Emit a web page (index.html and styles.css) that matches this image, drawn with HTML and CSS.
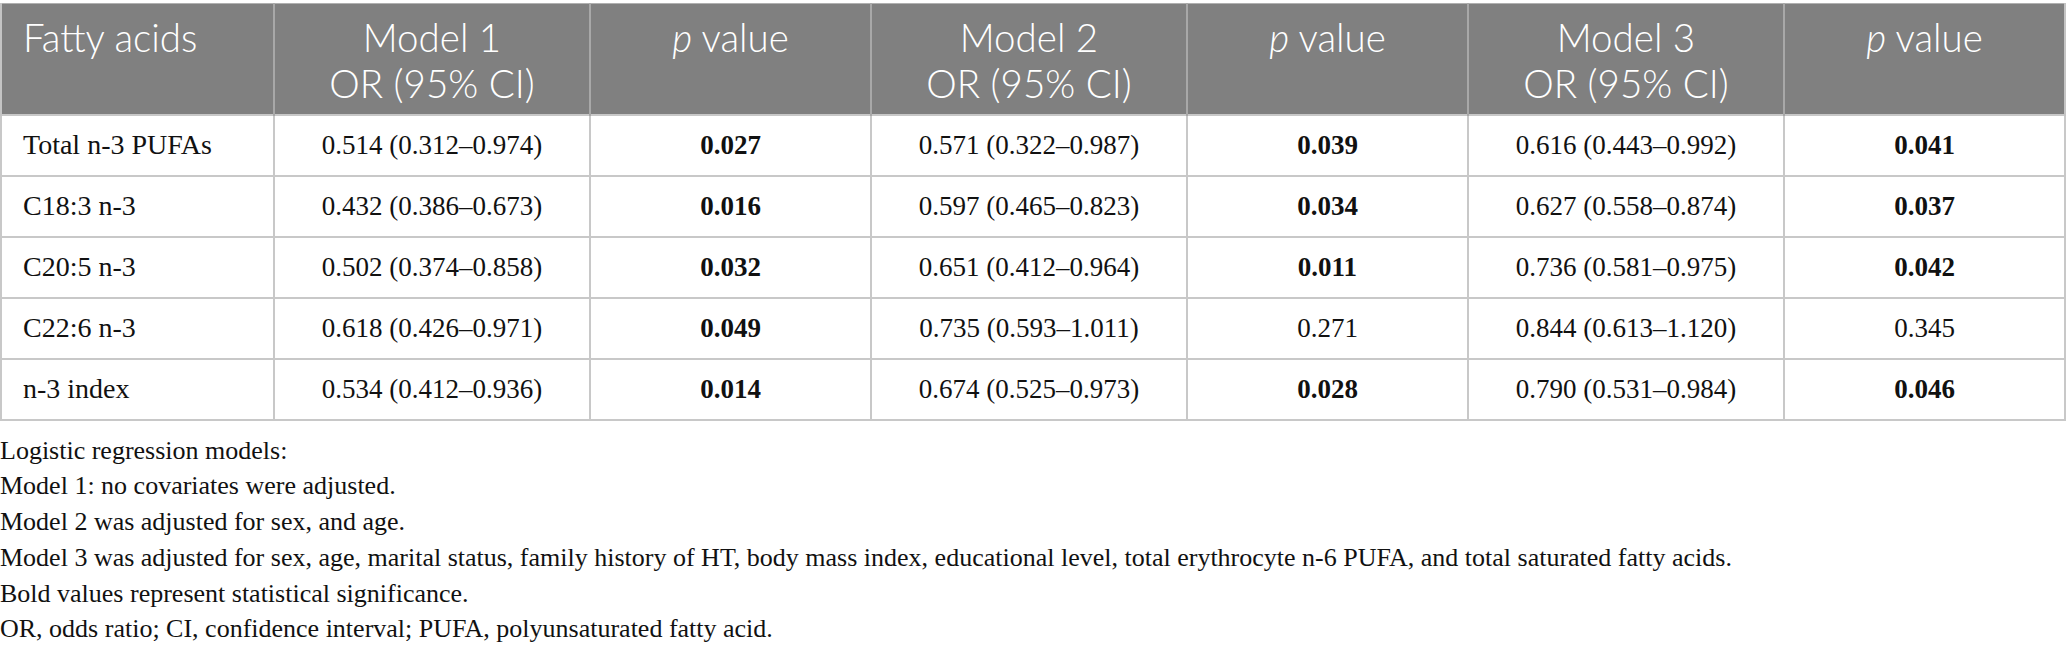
FILE: index.html
```html
<!DOCTYPE html>
<html>
<head>
<meta charset="utf-8">
<link rel="stylesheet" href="styles.css">
</head>
<body>
<div class="page">
<table class="data">
  <colgroup>
    <col class="c-name">
    <col class="c-or">
    <col class="c-p">
    <col class="c-or">
    <col class="c-p">
    <col class="c-or">
    <col class="c-p">
  </colgroup>
  <thead>
    <tr>
      <th class="left"><span class="hl">Fatty acids</span></th>
      <th><span class="hl">Model 1</span><span class="hl">OR (95% CI)</span></th>
      <th><span class="hl"><i>p</i> value</span></th>
      <th><span class="hl">Model 2</span><span class="hl">OR (95% CI)</span></th>
      <th><span class="hl"><i>p</i> value</span></th>
      <th><span class="hl">Model 3</span><span class="hl">OR (95% CI)</span></th>
      <th><span class="hl"><i>p</i> value</span></th>
    </tr>
  </thead>
  <tbody>
    <tr>
      <td class="left">Total n-3 PUFAs</td>
      <td>0.514 (0.312–0.974)</td>
      <td><b>0.027</b></td>
      <td>0.571 (0.322–0.987)</td>
      <td><b>0.039</b></td>
      <td>0.616 (0.443–0.992)</td>
      <td><b>0.041</b></td>
    </tr>
    <tr>
      <td class="left">C18:3 n-3</td>
      <td>0.432 (0.386–0.673)</td>
      <td><b>0.016</b></td>
      <td>0.597 (0.465–0.823)</td>
      <td><b>0.034</b></td>
      <td>0.627 (0.558–0.874)</td>
      <td><b>0.037</b></td>
    </tr>
    <tr>
      <td class="left">C20:5 n-3</td>
      <td>0.502 (0.374–0.858)</td>
      <td><b>0.032</b></td>
      <td>0.651 (0.412–0.964)</td>
      <td><b>0.011</b></td>
      <td>0.736 (0.581–0.975)</td>
      <td><b>0.042</b></td>
    </tr>
    <tr>
      <td class="left">C22:6 n-3</td>
      <td>0.618 (0.426–0.971)</td>
      <td><b>0.049</b></td>
      <td>0.735 (0.593–1.011)</td>
      <td>0.271</td>
      <td>0.844 (0.613–1.120)</td>
      <td>0.345</td>
    </tr>
    <tr>
      <td class="left">n-3 index</td>
      <td>0.534 (0.412–0.936)</td>
      <td><b>0.014</b></td>
      <td>0.674 (0.525–0.973)</td>
      <td><b>0.028</b></td>
      <td>0.790 (0.531–0.984)</td>
      <td><b>0.046</b></td>
    </tr>
  </tbody>
</table>
<div class="notes">
  <p>Logistic regression models:</p>
  <p>Model 1: no covariates were adjusted.</p>
  <p>Model 2 was adjusted for sex, and age.</p>
  <p>Model 3 was adjusted for sex, age, marital status, family history of HT, body mass index, educational level, total erythrocyte n-6 PUFA, and total saturated fatty acids.</p>
  <p>Bold values represent statistical significance.</p>
  <p>OR, odds ratio; CI, confidence interval; PUFA, polyunsaturated fatty acid.</p>
</div>
</div>
</body>
</html>
```
FILE: styles.css
```css
html, body {
  margin: 0;
  padding: 0;
  background: #ffffff;
}
.page {
  padding-top: 3px;
  width: 2067px;
}
.data {
  border-collapse: collapse;
  table-layout: fixed;
  width: 2066px;
  margin-left: 0;
}
.c-name { width: 273px; }
.c-or { width: 316px; }
.c-p { width: 281px; }
.data th {
  background: #808080;
  color: #ffffff;
  font-family: "Lato", "Open Sans", sans-serif;
  font-weight: 300;
  font-size: 38.5px;
  text-align: center;
  vertical-align: top;
  height: 111px;
  box-sizing: border-box;
  padding: 10px 8px 0;
  border-left: 2px solid #a8a8a8;
  border-top: 1px solid #b0b0b0;
}
.data th .hl {
  display: block;
  line-height: 46.3px;
  white-space: nowrap;
}
.data th:first-child { border-left: 2px solid #c4c4c4; }
.data th:last-child { border-right: 2px solid #c4c4c4; }
.data th i { font-style: italic; }
.data td {
  font-family: "Liberation Serif", "Times New Roman", serif;
  font-size: 27px;
  color: #111;
  text-align: center;
  vertical-align: middle;
  height: 61px;
  box-sizing: border-box;
  padding: 0 10px;
  border: 2px solid #c8c8c8;
}
.data th.left, .data td.left {
  text-align: left;
  padding-left: 21px;
}
.data td.left { font-size: 28px; }
.data td b { font-weight: 700; }
.notes {
  padding-top: 12px;
  font-family: "Liberation Serif", "Times New Roman", serif;
  font-size: 26px;
  color: #111;
}
.notes p {
  margin: 0;
  line-height: 35.8px;
}
```
